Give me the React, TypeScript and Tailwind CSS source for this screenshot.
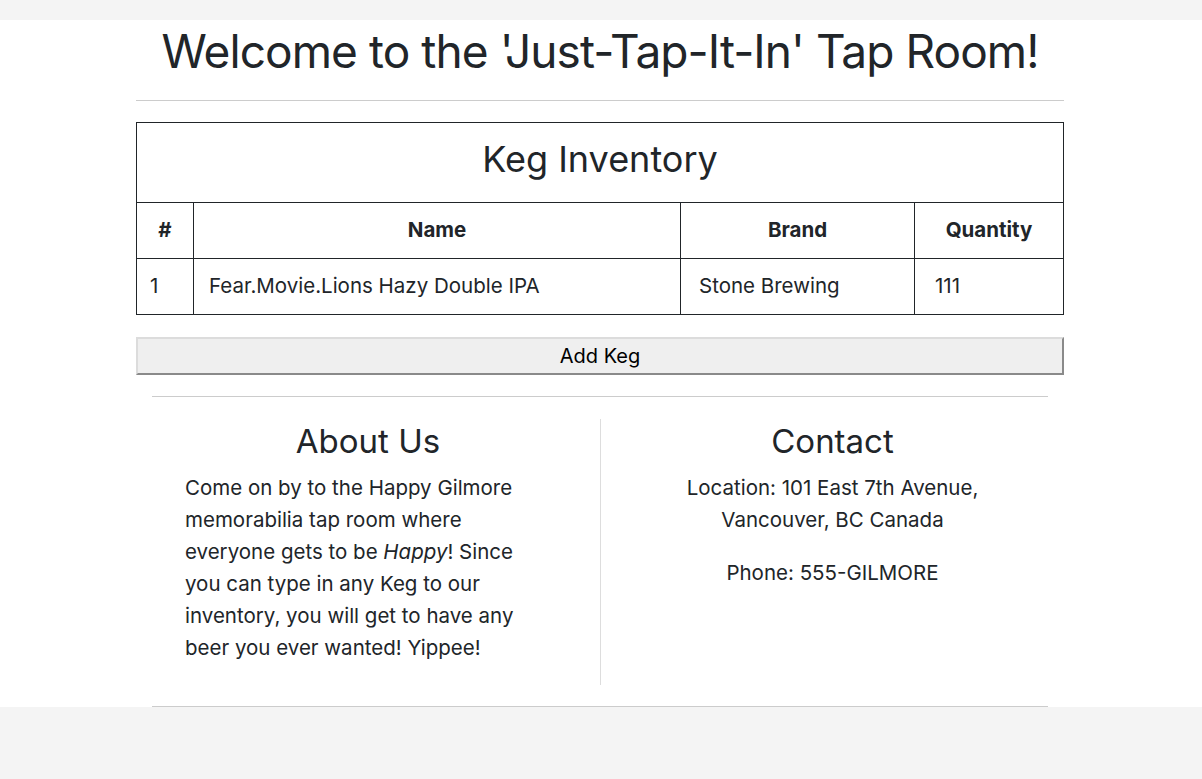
import React from 'react';

const font = { fontFamily: 'Inter, "Liberation Sans", sans-serif' };

type Keg = { id: number; name: string; brand: string; quantity: number };

const kegs: Keg[] = [
  { id: 1, name: 'Fear.Movie.Lions Hazy Double IPA', brand: 'Stone Brewing', quantity: 111 },
];

function KegTable() {
  return (
    <table className="w-full border-collapse border border-[#212529] text-[20.5px] text-[#212529]">
      <thead>
        <tr className="h-[80px]">
          <th colSpan={4} className="border border-[#212529] pb-[8px] text-center text-[36px] font-normal">
            Keg Inventory
          </th>
        </tr>
        <tr className="h-[56px]">
          <th className="w-[57px] border border-[#212529] font-bold">#</th>
          <th className="w-[487px] border border-[#212529] font-bold">Name</th>
          <th className="w-[234px] border border-[#212529] font-bold">Brand</th>
          <th className="border border-[#212529] font-bold">Quantity</th>
        </tr>
      </thead>
      <tbody>
        {kegs.map((keg) => (
          <tr key={keg.id} className="h-[56px]">
            <td className="border border-[#212529] pl-[13px]">{keg.id}</td>
            <td className="border border-[#212529] pl-[15px]">{keg.name}</td>
            <td className="border border-[#212529] pl-[18px]">{keg.brand}</td>
            <td className="border border-[#212529] pl-[20px]">{keg.quantity}</td>
          </tr>
        ))}
      </tbody>
    </table>
  );
}

export default function App() {
  return (
    <div className="min-h-screen bg-[#f4f4f4] pt-5" style={font}>
      <div className="bg-white text-[#212529]">
        <div className="ml-[136px] w-[928px]">
          <h1 className="pt-[4px] text-center text-[46px] leading-[1.2] tracking-[-0.02em] whitespace-nowrap">
            Welcome to the 'Just-Tap-It-In' Tap Room!
          </h1>
          <hr className="mt-[21px] mb-[21px] border-t border-[#cccccc]" />
          <KegTable />
          <button className="mt-[22px] h-[38px] w-full border-2 border-t-[#dcdcdc] border-l-[#dcdcdc] border-r-[#8a8a8a] border-b-[#8a8a8a] bg-[#efefef] text-[20px] text-black">
            Add Keg
          </button>
        </div>
        <div className="ml-[152px] mt-[21px] w-[896px]">
          <hr className="border-t border-[#cccccc]" />
          <div className="mt-[22px] mb-[21px] grid grid-cols-2">
            <div className="pr-[16px] pb-[21px]">
              <h2 className="pt-[3px] text-center text-[33px] leading-[1.2]">About Us</h2>
              <p className="mt-[10px] w-[372px] pl-[33px] text-[20.5px] leading-[32px]">
                Come on by to the Happy Gilmore memorabilia tap room where everyone gets to be{' '}
                <em>Happy</em>! Since you can type in any Keg to our inventory, you will get to have any
                beer you ever wanted! Yippee!
              </p>
            </div>
            <div className="border-l border-[#dddddd] pl-[32px] pr-[16px] text-center">
              <h2 className="pt-[3px] text-[33px] leading-[1.2]">Contact</h2>
              <p className="mt-[10px] text-[20.5px] leading-[32px]">
                Location: 101 East 7th Avenue, Vancouver, BC Canada
              </p>
              <p className="mt-[21px] text-[20.5px] leading-[32px]">Phone: 555-GILMORE</p>
            </div>
          </div>
          <hr className="border-t border-[#cccccc]" />
        </div>
      </div>
    </div>
  );
}
